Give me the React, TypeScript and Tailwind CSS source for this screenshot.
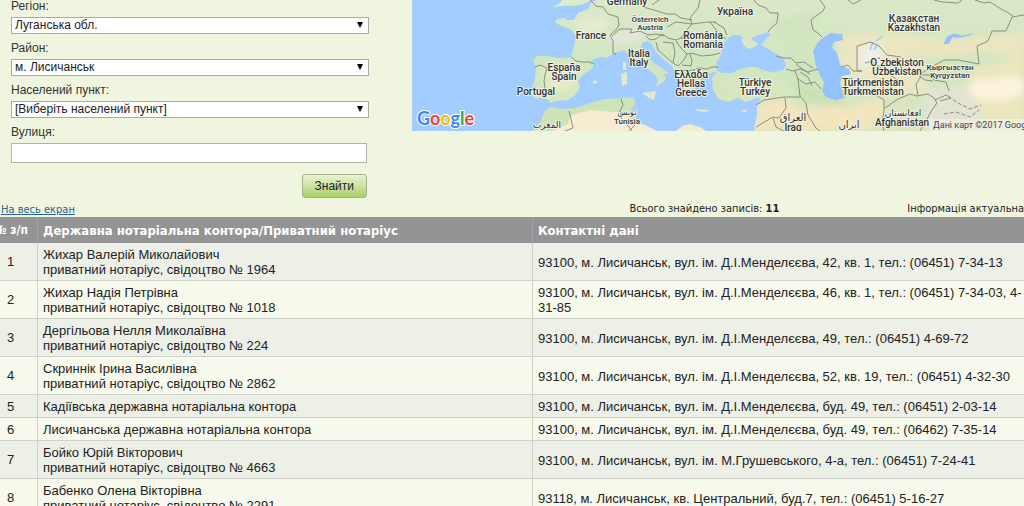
const selects = [
    { id: "region", label: "Регіон:", value: "Луганська обл." },
    { id: "district", label: "Район:", value: "м. Лисичанськ" },
    { id: "city", label: "Населений пункт:", value: "[Виберіть населений пункт]" },
];

const rows = [
    { name: "Жихар Валерій Миколайович", cert: "1964", contact: "93100, м. Лисичанськ, вул. ім. Д.І.Менделєєва, 42, кв. 1, тел.: (06451) 7-34-13" },
    { name: "Жихар Надія Петрівна", cert: "1018", contact: "93100, м. Лисичанськ, вул. ім. Д.І.Менделєєва, 46, кв. 1, тел.: (06451) 7-34-03, 4-31-85" },
    { name: "Дергільова Нелля Миколаївна", cert: "224", contact: "93100, м. Лисичанськ, вул. ім. Д.І.Менделєєва, 49, тел.: (06451) 4-69-72" },
    { name: "Скриннік Ірина Василівна", cert: "2862", contact: "93100, м. Лисичанськ, вул. ім. Д.І.Менделєєва, 52, кв. 19, тел.: (06451) 4-32-30" },
    { name: "Кадіївська державна нотаріальна контора", contact: "93100, м. Лисичанськ, вул. ім. Д.І.Менделєєва, буд. 49, тел.: (06451) 2-03-14" },
    { name: "Лисичанська державна нотаріальна контора", contact: "93100, м. Лисичанськ, вул. ім. Д.І.Менделєєва, буд. 49, тел.: (06462) 7-35-14" },
    { name: "Бойко Юрій Вікторович", cert: "4663", contact: "93100, м. Лисичанськ, вул. ім. М.Грушевського, 4-а, тел.: (06451) 7-24-41" },
    { name: "Бабенко Олена Вікторівна", cert: "2291", contact: "93118, м. Лисичанськ, кв. Центральний, буд.7, тел.: (06451) 5-16-27" },
];

// x, baseline, size, text
const labels: [number, number, number, string][] = [
    [627, 5, 10, "Germany"],
    [650, 22, 8, "Österreich"],
    [650, 30, 8, "Austria"],
    [591, 39, 10, "France"],
    [639, 57, 10, "Italia"],
    [639, 66, 10, "Italy"],
    [564, 71, 10, "España"],
    [564, 80, 10, "Spain"],
    [536, 95, 10, "Portugal"],
    [703, 39, 10, "România"],
    [703, 48, 10, "Romania"],
    [691, 78, 10, "Ελλάδα"],
    [691, 87, 10, "Hellas"],
    [691, 96, 10, "Greece"],
    [735, 15, 10, "Україна"],
    [755, 86, 10, "Türkiye"],
    [755, 95, 10, "Turkey"],
    [914, 22, 10, "Қазақстан"],
    [914, 31, 10, "Kazakhstan"],
    [897, 66, 10, "O`zbekiston"],
    [897, 75, 10, "Uzbekistan"],
    [873, 86, 10, "Türkmenistan"],
    [873, 95, 10, "Turkmenistan"],
    [950, 70, 8, "Кыргызстан"],
    [950, 78, 8, "Kyrgyzstan"],
    [903, 116, 9, "افغانستان"],
    [902, 126, 10, "Afghanistan"],
    [793, 121, 10, "العراق"],
    [793, 131, 10, "Iraq"],
    [849, 128, 10, "ایران"],
    [547, 128, 9, "المغرب"],
    [627, 115, 8, "تونس"],
    [627, 124, 8, "Tunisia"],
];

function MapView() {
    return (
        <svg
            className="block h-[131px] w-full"
            viewBox="412 0 612 131"
            preserveAspectRatio="xMinYMin slice"
            role="img"
            aria-label="Google"
        >
            <defs>
                <linearGradient id="land" x1="0" y1="0" x2="0" y2="1">
                    <stop offset="0" stopColor="#dbe8c8" />
                    <stop offset="0.55" stopColor="#cfe6bf" />
                    <stop offset="1" stopColor="#dde6c0" />
                </linearGradient>
                <filter id="soft" x="-20%" y="-20%" width="140%" height="140%">
                    <feGaussianBlur stdDeviation="3" />
                </filter>
                <clipPath id="coast">
                    <path id="eurasia" d="M597 0L591 3L588 9L578 13L574 20L567 20L565 18L557 19L555 22L561 26L570 29L574 33L577 38L575 41L573 50L571 57L560 58L547 56L537 56L533 60L536 66L535 78L531 92L534 98L540 98L547 99L550 103L556 101L568 100L575 95L580 88L578 80L584 74L593 68L594 63L590 61L600 57L607 58L613 54L618 52L624 50L631 57L640 65L648 69L654 74L658 80L656 87L662 83L666 79L664 74L669 73L662 68L654 63L646 55L641 48L642 43L648 41L652 44L656 52L664 60L672 66L676 74L679 84L686 92L690 98L697 93L694 87L702 84L700 78L707 74L716 72L712 78L713 90L718 99L728 102L738 98L746 102L756 98L761 98L757 105L757 115L754 131H1024V0Z" />
                </clipPath>
            </defs>
            <rect x="412" width="612" height="131" fill="#a3ccff" />
            <path d="M552 7L560 3L562 0H592L584 4L573 6L562 6Z" fill="#dcebc9" />
            <use href="#eurasia" fill="url(#land)" />
            <g clipPath="url(#coast)">
                <g filter="url(#soft)">
                    <path d="M760 105L785 97L800 110L830 104L848 108L880 98L885 112L865 131H750Z" fill="#f3e5bd" />
                    <path d="M832 38L860 32L905 34L945 40L985 36L1024 32V60L985 52L960 56L920 58L880 55L845 60Z" fill="#ebe5c0" />
                    <path d="M838 55L870 45L920 62L930 92L905 96L880 96L842 86Z" fill="#eae7c5" />
                    <path d="M976 66L1024 58V131H985L960 108Z" fill="#ece6be" />
                    <path d="M968 84C975 76 990 82 1000 78S1020 78 1024 80V94C1010 102 985 104 970 95Z" fill="#fbf3dc" />
                    <path d="M925 88L965 84L992 131H925Z" fill="#e3e3d2" />
                    <path d="M860 48L880 42L882 62L860 68Z" fill="#eff0e8" />
                    <path d="M608 38L640 28L648 35L615 44Z" fill="#e8e6e2" />
                    <path d="M540 66L580 64L576 90L545 95Z" fill="#e1ebc6" />
                    <path d="M575 20L605 15L610 30L580 36Z" fill="#e3ecd0" />
                    <path d="M770 20L820 10L812 48L780 42Z" fill="#d3e5c0" />
                    <path d="M722 76L775 76L790 92L730 94Z" fill="#d9e7c0" />
                    <path d="M790 80L822 92L850 104L825 106L800 98Z" fill="#c8e1b4" />
                </g>
            </g>
            <path d="M532 131L540 122L545 110L551 107L560 109L575 108L590 103L605 99L625 98L634 97L635 104L631 110L637 117L636 122L645 125L657 131Z" fill="#cde3b8" />
            <path d="M553 131L568 124L570 116L590 110L612 112L622 112L636 124L645 125L657 131Z" fill="#f6ecd2" />
            <path d="M676 131L682 126L690 124L702 128L706 131Z" fill="#f4ead0" />
            {/* Black, Azov, Marmara and Caspian seas */}
            <path d="M716 70L717 62L721 54L724 44L728 38L733 35L740 35L743 39L746 45L751 49L758 45L756 42L752 42L752 38L759 35L768 32L770 35L765 40L761 45L768 49L778 55L784 59L786 65L783 70L775 72L765 71L757 67L748 67L738 70L732 73L722 73Z" fill="#a3ccff" />
            <path d="M741 40L746 38L751 40L758 43L753 46L748 49L744 45Z" fill="#dbe8c8" />
            <path d="M824 37L831 33L842 34L843 40L834 42L832 47L837 53L839 61L841 66L849 69L851 74L842 76L840 84L843 92L845 98L835 100L826 97L822 91L824 83L820 75L816 66L814 56L813 51L818 42Z" fill="#94c2fb" />
            <path d="M944 44L947 37L954 34L963 36L972 34L962 37L952 37L949 43Z" fill="#94c2fb" stroke="#94c2fb" />
            <path d="M870 50L873 42M876 41L883 36M874 50L877 45" fill="none" stroke="#9cc6fa" strokeWidth="1.5" />
            <path d="M623 62L626 62L626 70L623 70ZM621 74L627 72L627 84L622 86ZM642 93L656 91L654 100L649 98ZM592 82L595 80L598 82L595 84ZM696 109L709 110L706 112L697 111ZM740 111L748 109L746 112Z" fill="#dfe9cc" />
            <g fill="none" stroke="#85837a" strokeWidth="0.9" strokeLinejoin="round">
                <path d="M571 57L576 61L583 62L589 62L594 64M535 67L540 65L547 68L545 75L544 81L545 88L542 96M590 0L596 6L603 7L608 14L618 17L619 25L616 30L610 35L613 41L613 53L616 54" />
                <path d="M612 36L620 29L632 29L630 33L640 31L648 35L656 34L664 36M640 0L643 7L654 10L667 14L675 14L681 18L692 20M652 5L659 0M667 27L676 22L692 24L708 22L716 22M700 0L698 8L690 18L692 24L686 31L681 38M646 36L650 40L656 39L662 34L668 38L676 40L681 38L689 39M656 42L658 50L666 57L673 63L675 53L673 43L663 42M676 41L681 48L687 54L684 60L678 66L673 63M687 54L691 53L702 56L713 55L720 53M682 65L691 66L692 61L690 54M679 70L688 71L699 68L707 69L712 67L718 67M710 22L717 31L718 38L726 38M714 22L724 28L727 35" />
                <path d="M754 0L758 5L766 8L770 13L778 13L777 23L770 29L768 32M820 0L825 7L823 11L816 16L811 20L813 30L818 33L822 37M848 0L853 4L861 0M776 56L784 58L791 58L796 63L804 62L813 68M786 69L793 71L800 69L808 72L818 69M796 64L801 68L810 74M795 71L798 79L806 84L815 82L821 89M800 72L808 77L812 86M798 79L800 96L806 103L808 115L816 128L820 131M756 105L764 100L784 97L800 97M785 98L786 108L779 118L773 117L756 127M773 118L776 127L784 131" />
                <path d="M841 67L848 65L853 71L862 71L857 71V46L870 42L879 46L887 55L901 57M865 63L872 61L880 67L893 77L900 82M841 87L850 92L862 92L876 95L884 100L884 112L882 121L884 131M885 108L898 99L910 94L917 96L928 94L934 98L937 103L932 110L926 121L920 131M922 73L928 69L944 60L958 60L979 64L977 46L988 41L992 31L1006 31L1012 17L1024 15M934 0L942 2L958 3L962 0M975 0L984 3L990 2L1001 9L1007 12L1013 16M918 95L916 84L922 75L930 75L934 80L946 82L949 91M919 76L925 80L933 81M935 100L946 95L951 98L940 101" />
                <path d="M569 111L571 119L573 128L565 131M621 99L623 105L620 111L621 118L629 127L632 131M629 131L637 123" />
            </g>
            <path d="M948 96L958 103L970 109L981 105M944 114L956 112L970 117L979 110" fill="none" stroke="#85837a" strokeWidth="0.9" strokeDasharray="4 2" />
            <g
                textAnchor="middle"
                fill="#333"
                stroke="#f7f7f0"
                strokeWidth="2"
                strokeOpacity="0.75"
                strokeLinejoin="round"
                paintOrder="stroke"
                className="font-[Roboto,'DejaVu_Sans',sans-serif] font-medium"
            >
                {labels.map(([x, y, size, text]) => (
                    <text key={text} x={x} y={y} fontSize={size}>{text}</text>
                ))}
            </g>
            <rect x="929" y="119" width="95" height="12" fill="#f5f5f5" fillOpacity="0.5" />
            <text x="933" y="128" fontSize="9" fill="#444" className="font-[Roboto,sans-serif]">Дані карт ©2017 Goog</text>
            <text
                x="417"
                y="125"
                fontSize="18"
                stroke="#fff"
                strokeWidth="2"
                paintOrder="stroke"
                className="font-[Lato,sans-serif] font-bold"
            >
                <tspan fill="#4285f4">G</tspan>
                <tspan fill="#ea4335">o</tspan>
                <tspan fill="#fbbc05">o</tspan>
                <tspan fill="#4285f4">g</tspan>
                <tspan fill="#34a853">l</tspan>
                <tspan fill="#ea4335">e</tspan>
            </text>
        </svg>
    );
}

function SearchForm() {
    return (
        <form action="#" className="-mt-0.5 w-[358px] shrink-0 font-['Liberation_Sans',Arial,sans-serif] text-xs text-[#333]">
            {selects.map((s) => (
                <div key={s.id} className="mb-1.5">
                    <label htmlFor={s.id} className="mb-[3px] block leading-4">{s.label}</label>
                    <div className="relative">
                        <select id={s.id} className="block h-[17px] w-full appearance-none border border-[#a9a9a9] bg-white px-[3px] leading-[15px] text-[#222]">
                            <option>{s.value}</option>
                        </select>
                        <svg className="pointer-events-none absolute top-[5px] right-1.5 h-1.5 w-1.5" viewBox="0 0 6 6" aria-hidden="true">
                            <path d="M0 0H6L3 6Z" fill="#000" />
                        </svg>
                    </div>
                </div>
            ))}
            <div className="pr-0.5">
                <label htmlFor="street" className="mb-[3px] block leading-4">Вулиця:</label>
                <input id="street" type="text" className="block h-5 w-full border border-[#b0b5a8] bg-white px-1" />
                <div className="mt-[11px] flex justify-end">
                    <button type="submit" className="h-6 rounded-[3px] border border-[#a3b58c] bg-linear-to-b from-[#e6f2cf] via-[#cde3a5] to-[#a6cf5f] px-3 text-[#222]">
                        Знайти
                    </button>
                </div>
            </div>
        </form>
    );
}

export default function App() {
    return (
        <main className="h-screen overflow-hidden bg-[#f0f5df] font-['DejaVu_Sans_Condensed','DejaVu_Sans',Tahoma,sans-serif] text-[#222]">
            <div className="flex h-[202px] items-start gap-[43px] pl-[11px]">
                <SearchForm />
                <div className="min-w-0 flex-1">
                    <MapView />
                </div>
            </div>
            <div className="flex h-[15px] items-center text-[11px] whitespace-nowrap">
                <a href="#" className="flex-1 pt-0.5 pl-px text-[#2a6496] underline">На весь екран</a>
                <p className="pr-32">
                    Всього знайдено записів: <b>11</b>
                </p>
                <p>Інформація актуальна</p>
            </div>
            <div className="-ml-4">
                <table className="w-full table-fixed border-separate border-spacing-0 text-[13px] leading-[15px]">
                    <colgroup>
                        <col className="w-[54px]" />
                        <col className="w-[495px]" />
                        <col />
                    </colgroup>
                    <thead>
                        <tr className="h-[26px] bg-[#949494] text-left text-white">
                            <th className="border-r border-[#a2a2a2] pr-[9px] text-right text-xs whitespace-nowrap">№ з/п</th>
                            <th className="border-r border-[#a2a2a2] px-[5px]">Державна нотаріальна контора/Приватний нотаріус</th>
                            <th className="px-[5px]">Контактні дані</th>
                        </tr>
                    </thead>
                    <tbody className="font-['Liberation_Sans',Tahoma,sans-serif]">
                        {rows.map((r, i) => (
                            <tr key={r.name} className="odd:bg-[#edf0e7] even:bg-[#f7f9ec]">
                                <td className="border-r border-b border-[#cdd1c8] text-center">{i + 1}</td>
                                <td className="border-r border-b border-[#cdd1c8] px-[5px] pt-1 pb-[3px]">
                                    {r.name}
                                    {r.cert && (
                                        <>
                                            <br />
                                            приватний нотаріус, свідоцтво № {r.cert}
                                        </>
                                    )}
                                </td>
                                <td className="border-b border-[#cdd1c8] pt-1 pb-[3px] pl-[5px]">{r.contact}</td>
                            </tr>
                        ))}
                    </tbody>
                </table>
            </div>
        </main>
    );
}
